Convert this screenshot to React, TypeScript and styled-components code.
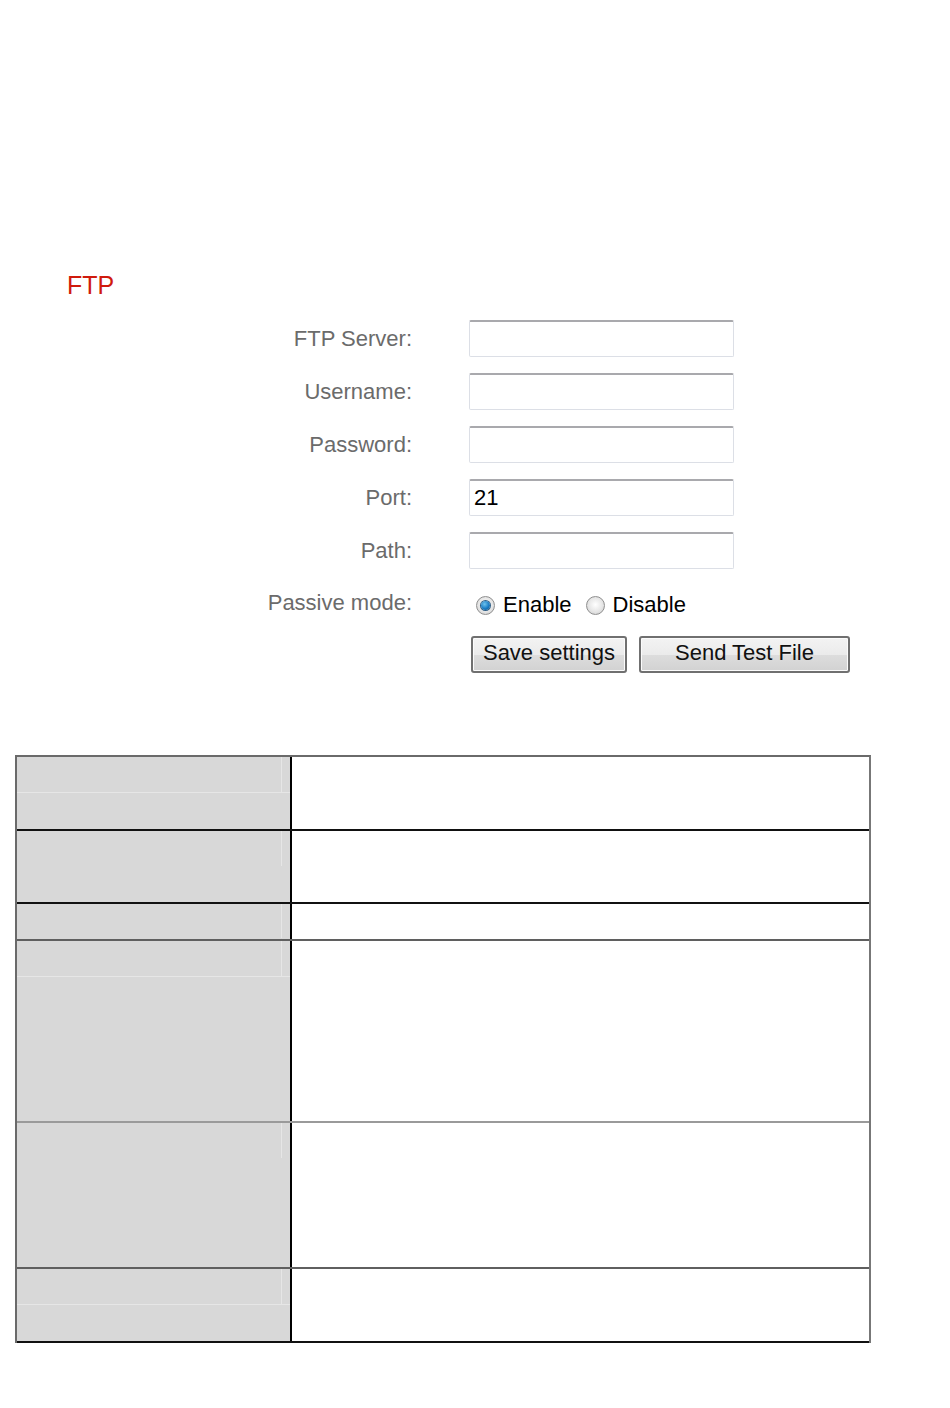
import React from "react";
import styled, { createGlobalStyle } from "styled-components";

const GlobalStyle = createGlobalStyle`
  html, body { margin: 0; padding: 0; background: #ffffff; }
  body { font-family: "Liberation Sans", Arial, sans-serif; }
  * { box-sizing: border-box; }
`;

const Page = styled.div`
  width: 950px;
  min-height: 1408px;
  padding-top: 270px;
  background: #fff;
`;

const Title = styled.h2`
  margin: 0 0 0 67px;
  font-size: 25px;
  line-height: 30px;
  font-weight: normal;
  color: #d01a0c;
`;

const Form = styled.div`
  margin-top: 20px;
  display: grid;
  grid-template-columns: 412px 265px;
  column-gap: 57px;
  row-gap: 16px;
  align-items: center;
`;

const Label = styled.label<{ $h?: number }>`
  text-align: right;
  font-size: 22px;
  line-height: ${(p) => p.$h ?? 37}px;
  color: #6b6b6b;
  white-space: nowrap;
`;

const Field = styled.input`
  width: 265px;
  height: 37px;
  margin: 0;
  padding: 0 4px;
  font-family: "Liberation Sans", Arial, sans-serif;
  font-size: 22px;
  color: #000;
  background: #fff;
  border: 1px solid #dcdfe6;
  border-top: 2px solid #a9a9ad;
  border-radius: 2px;
  outline: none;
`;

const RadioGroup = styled.div`
  display: flex;
  align-items: center;
  height: 35px;
  padding-left: 7px;
  gap: 14px;
`;

const RadioOption = styled.label`
  display: flex;
  align-items: center;
  gap: 8px;
  font-size: 22px;
  color: #000;
  padding-top: 5px;
`;

const RadioDot = styled.span<{ $checked?: boolean }>`
  width: 19px;
  height: 19px;
  border-radius: 50%;
  border: 1px solid #8f8f8f;
  background: radial-gradient(circle at 50% 45%, #ffffff 0%, #e6e6e6 55%, #c9c9c9 100%);
  display: flex;
  align-items: center;
  justify-content: center;
  &::before {
    content: "";
    display: ${(p) => (p.$checked ? "block" : "none")};
    width: 9px;
    height: 9px;
    border-radius: 50%;
    background: radial-gradient(circle at 40% 35%, #6fc3ee 0%, #1a7cc4 55%, #0b4f86 100%);
    box-shadow: 0 0 0 1px #2f5f86;
  }
`;

const Buttons = styled.div`
  grid-column: 2 / span 1;
  display: flex;
  gap: 12px;
  padding-left: 2px;
  white-space: nowrap;
`;

const Button = styled.button<{ $w: number }>`
  width: ${(p) => p.$w}px;
  height: 37px;
  margin: 0;
  padding: 0 0 3px;
  font-family: "Liberation Sans", Arial, sans-serif;
  font-size: 22px;
  color: #111;
  border: 2px solid #707070;
  border-radius: 3px;
  background: linear-gradient(#f3f3f3 0%, #ebebeb 50%, #dddddd 51%, #d2d2d2 100%);
  box-shadow: inset 0 0 0 1px #fbfbfb;
  flex: none;
`;

const Table = styled.div`
  margin: 82px 0 0 15px;
  width: 856px;
  border-top: 2px solid #6a6a6a;
  border-left: 2px solid #6a6a6a;
  border-right: 2px solid #777;
`;

const Row = styled.div<{ $h: number; $line: string }>`
  display: grid;
  grid-template-columns: 275px 1fr;
  height: ${(p) => p.$h}px;
  border-bottom: 2px solid ${(p) => p.$line};
`;

const HeadCell = styled.div`
  background: #d8d8d8;
  border-right: 2px solid #000;
`;

const BodyCell = styled.div`
  background: #fff;
`;

const Stripe = styled.div<{ $h: number; $ruled?: boolean }>`
  display: flex;
  height: ${(p) => p.$h}px;
  border-bottom: 1px solid ${(p) => (p.$ruled ? "#e6e6e6" : "transparent")};
`;

const Tick = styled.span`
  width: 1px;
  margin-left: auto;
  margin-right: 8px;
  background: #e6e6e6;
`;

const rows = [
  { h: 74, line: "#111", stripe: 36, ruled: true },
  { h: 73, line: "#111", stripe: 36, ruled: false },
  { h: 37, line: "#5f5f5f", stripe: 35, ruled: false },
  { h: 182, line: "#9a9a9a", stripe: 36, ruled: true },
  { h: 146, line: "#5f5f5f", stripe: 36, ruled: false },
  { h: 74, line: "#111", stripe: 36, ruled: true },
];

export default function App() {
  return (
    <>
      <GlobalStyle />
      <Page>
        <Title>FTP</Title>
        <Form>
          <Label>FTP Server:</Label>
          <Field type="text" defaultValue="" />
          <Label>Username:</Label>
          <Field type="text" defaultValue="" />
          <Label>Password:</Label>
          <Field type="password" defaultValue="" />
          <Label>Port:</Label>
          <Field type="text" defaultValue="21" />
          <Label>Path:</Label>
          <Field type="text" defaultValue="" />
          <Label $h={35}>Passive mode:</Label>
          <RadioGroup>
            <RadioOption>
              <RadioDot $checked />
              Enable
            </RadioOption>
            <RadioOption>
              <RadioDot />
              Disable
            </RadioOption>
          </RadioGroup>
          <Buttons>
            <Button $w={156}>Save settings</Button>
            <Button $w={211}>Send Test File</Button>
          </Buttons>
        </Form>
        <Table>
          {rows.map((r, i) => (
            <Row key={i} $h={r.h} $line={r.line}>
              <HeadCell>
                <Stripe $h={r.stripe} $ruled={r.ruled}>
                  <Tick />
                </Stripe>
              </HeadCell>
              <BodyCell />
            </Row>
          ))}
        </Table>
      </Page>
    </>
  );
}
